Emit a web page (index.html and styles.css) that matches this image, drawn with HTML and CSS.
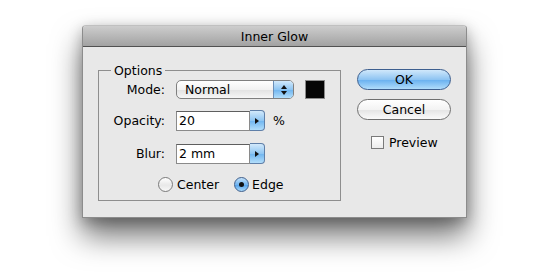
FILE: index.html
```html
<!DOCTYPE html>
<html lang="en">
<head>
    <meta charset="UTF-8">
    <title>Inner Glow</title>
    <link rel="stylesheet" href="styles.css">
</head>
<body>
    <div class="dialog">
        <div class="titlebar">Inner Glow</div>
        <div class="dialog-body">
            <div class="options">
                <span class="legend">Options</span>
                <div class="row row-mode">
                    <label class="row-label">Mode:</label>
                    <div class="popup">
                        <span class="popup-value">Normal</span>
                        <span class="stepper">
                            <span class="tri-up"></span>
                            <span class="tri-down"></span>
                        </span>
                    </div>
                    <div class="swatch"></div>
                </div>
                <div class="row row-opacity">
                    <label class="row-label">Opacity:</label>
                    <div class="field">20</div>
                    <span class="arrow-btn"><span class="tri-right"></span></span>
                    <span class="unit">%</span>
                </div>
                <div class="row row-blur">
                    <label class="row-label">Blur:</label>
                    <div class="field">2 mm</div>
                    <span class="arrow-btn"><span class="tri-right"></span></span>
                </div>
                <div class="radios">
                    <span class="radio"></span><span class="radio-text">Center</span>
                    <span class="radio checked"><span class="dot"></span></span><span class="radio-text">Edge</span>
                </div>
            </div>
            <div class="actions">
                <div class="btn btn-default">OK</div>
                <div class="btn">Cancel</div>
                <div class="check-row">
                    <span class="checkbox"></span><span>Preview</span>
                </div>
            </div>
        </div>
    </div>
</body>
</html>
```

FILE: styles.css
```css
html {
    background: #fff;
}
body {
    margin: 0;
    min-height: 272px;
    padding: 25px 0 0 82px;
    box-sizing: border-box;
    font-family: "DejaVu Sans", "Liberation Sans", sans-serif;
    font-size: 12.5px;
    color: #000;
}
.dialog {
    width: 383px;
    height: 191px;
    border: 1px solid #8c8c8c;
    border-top-color: #c0c0c0;
    border-radius: 4px 4px 0 0;
    background: #e8e8e8;
    box-shadow: 0 18px 30px rgba(0,0,0,0.55), 0 4px 14px rgba(0,0,0,0.25);
}
.titlebar {
    height: 20px;
    line-height: 21px;
    text-align: center;
    background: linear-gradient(#cdcdcd, #a2a2a2);
    border-bottom: 1px solid #515151;
    border-radius: 3px 3px 0 0;
}
.dialog-body {
    display: flex;
}
.options {
    margin: 23px 0 0 15px;
    width: 241px;
    height: 129px;
    border: 1px solid #8e8e8e;
}
.legend {
    display: block;
    width: fit-content;
    margin: -8px 0 0 12px;
    padding: 0 3px;
    height: 15px;
    line-height: 15px;
    background: #e8e8e8;
}
.row {
    display: flex;
    align-items: center;
}
.row-label {
    width: 66px;
    text-align: right;
    margin-right: 11px;
}
.row-mode {
    margin-top: 2px;
}
.popup {
    display: flex;
    width: 116px;
    height: 17px;
    border: 1px solid #7f7f7f;
    border-radius: 5px;
    background: linear-gradient(#ffffff, #f2f2f2 50%, #e2e2e2 51%, #f6f6f6);
    overflow: hidden;
}
.popup-value {
    flex: 1;
    padding-left: 8px;
    line-height: 18px;
}
.stepper {
    width: 19px;
    border-left: 1px solid #6b8fb8;
    background: linear-gradient(#d2e9fb, #8fc6f3 50%, #6eb4ef 51%, #b2defb);
    display: flex;
    flex-direction: column;
    align-items: center;
    justify-content: center;
    gap: 2px;
}
.tri-up {
    border: 3px solid transparent;
    border-top: 0;
    border-bottom: 4px solid #111;
}
.tri-down {
    border: 3px solid transparent;
    border-bottom: 0;
    border-top: 4px solid #111;
}
.swatch {
    margin-left: 11px;
    width: 18px;
    height: 17px;
    background: #050505;
    border: 1px solid #8a8a8a;
}
.row-opacity {
    margin-top: 11px;
}
.row-blur {
    margin-top: 12px;
}
.field {
    width: 70px;
    height: 18px;
    line-height: 18px;
    padding-left: 2px;
    background: #fff;
    border: 1px solid #8a8a8a;
    border-top-color: #5e5e5e;
}
.arrow-btn {
    width: 14px;
    height: 19px;
    border: 1px solid #5f7fa8;
    border-left: 0;
    border-radius: 0 4px 4px 0;
    background: linear-gradient(#d2e9fb, #8fc6f3 50%, #6eb4ef 51%, #b2defb);
    display: flex;
    align-items: center;
    justify-content: center;
}
.tri-right {
    border: 3px solid transparent;
    border-right: 0;
    border-left: 4px solid #111;
}
.unit {
    margin-left: 8px;
}
.radios {
    display: flex;
    align-items: center;
    margin: 13px 0 0 59px;
}
.radio {
    width: 13px;
    height: 13px;
    border: 1px solid #7a7a7a;
    border-radius: 50%;
    background: linear-gradient(#ffffff, #e8e8e8 55%, #f8f8f8);
    display: flex;
    align-items: center;
    justify-content: center;
}
.radio.checked {
    border-color: #3f5f8c;
    background: linear-gradient(#c4e2fa, #72b5f0 50%, #4f9fea 51%, #a8d8fa);
}
.dot {
    width: 5px;
    height: 5px;
    border-radius: 50%;
    background: #111;
}
.radio-text {
    margin: 0 15px 0 4px;
}
.radio-text:last-child {
    margin-left: 3px;
}
.actions {
    margin: 22px 0 0 16px;
    width: 94px;
    display: flex;
    flex-direction: column;
}
.btn {
    height: 19px;
    line-height: 19px;
    text-align: center;
    border: 1px solid #707070;
    border-radius: 11px;
    background: linear-gradient(#ffffff, #f3f3f3 50%, #e4e4e4 51%, #fafafa);
    margin-bottom: 9px;
}
.btn-default {
    border-color: #3d5f8f;
    background: linear-gradient(#d0e8fb, #8ec4f2 50%, #67afef 51%, #b0dcfb);
}
.check-row {
    display: flex;
    align-items: center;
    margin: 6px 0 0 14px;
}
.checkbox {
    width: 11px;
    height: 11px;
    border: 1px solid #7a7a7a;
    background: linear-gradient(#fff, #ececec);
    margin-right: 5px;
}
```
